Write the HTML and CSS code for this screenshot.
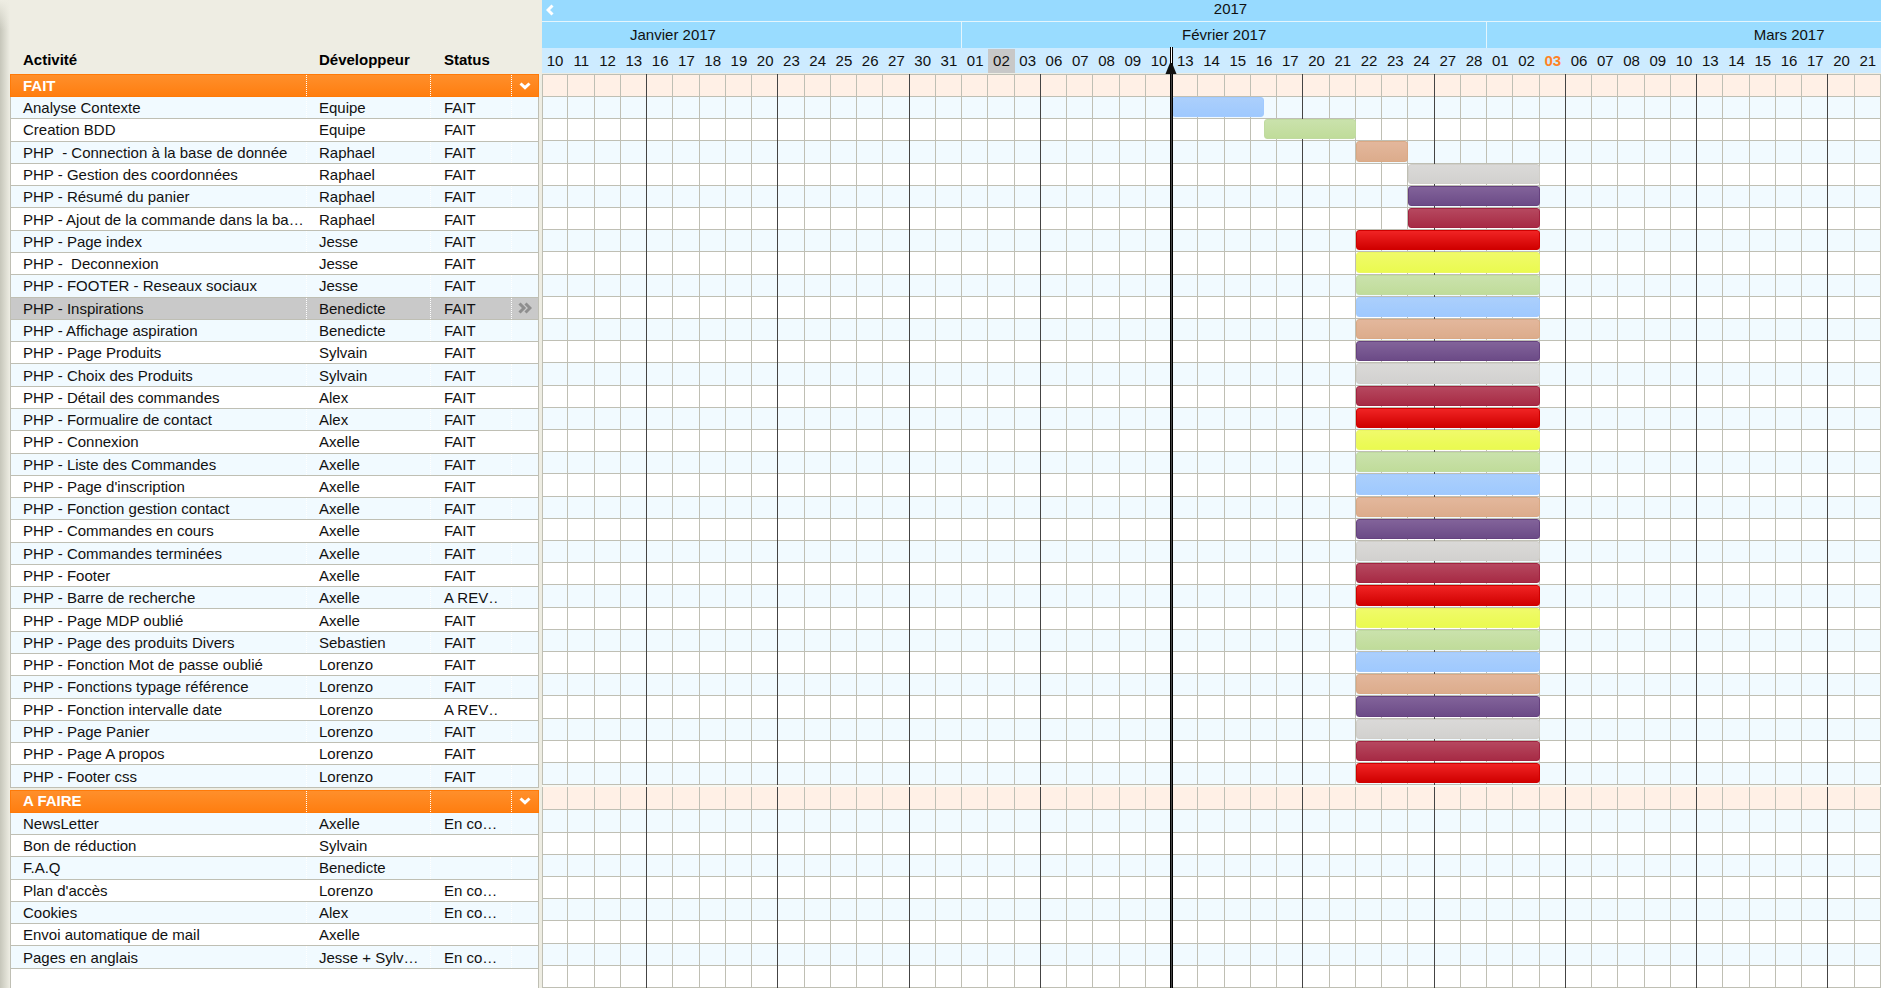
FILE: index.html
```html
<!DOCTYPE html>
<html lang="fr">
<head>
<meta charset="utf-8">
<title>Planning 2017</title>
<link rel="stylesheet" href="styles.css">
</head>
<body>
<main class="planner">
<section class="tasks">
<table class="task-table">
<thead>
<tr><th scope="col">Activité</th><th scope="col">Développeur</th><th scope="col">Status</th><th></th></tr>
</thead>
<tbody>
<tr class="group"><th scope="rowgroup">FAIT</th><td></td><td></td><td class="tool"><button type="button" aria-label="Replier FAIT"><svg width="12" height="8" viewBox="0 0 12 8"><path d="M1.5 1.5 6 5.7 10.5 1.5"/></svg></button></td></tr>
<tr class="tint"><td>Analyse Contexte</td><td>Equipe</td><td>FAIT</td><td></td></tr>
<tr><td>Creation BDD</td><td>Equipe</td><td>FAIT</td><td></td></tr>
<tr class="tint"><td>PHP&nbsp; - Connection à la base de donnée</td><td>Raphael</td><td>FAIT</td><td></td></tr>
<tr><td>PHP - Gestion des coordonnées</td><td>Raphael</td><td>FAIT</td><td></td></tr>
<tr class="tint"><td>PHP - Résumé du panier</td><td>Raphael</td><td>FAIT</td><td></td></tr>
<tr><td>PHP - Ajout de la commande dans la ba…</td><td>Raphael</td><td>FAIT</td><td></td></tr>
<tr class="tint"><td>PHP - Page index</td><td>Jesse</td><td>FAIT</td><td></td></tr>
<tr><td>PHP -&nbsp; Deconnexion</td><td>Jesse</td><td>FAIT</td><td></td></tr>
<tr class="tint"><td>PHP - FOOTER - Reseaux sociaux</td><td>Jesse</td><td>FAIT</td><td></td></tr>
<tr class="selected"><td>PHP - Inspirations</td><td>Benedicte</td><td>FAIT</td><td class="tool"><button type="button" aria-label="Ouvrir la tâche"><svg width="14" height="12" viewBox="0 0 14 12"><path d="M1.5 1.5 6 6 1.5 10.5M7.5 1.5 12 6 7.5 10.5"/></svg></button></td></tr>
<tr class="tint"><td>PHP - Affichage aspiration</td><td>Benedicte</td><td>FAIT</td><td></td></tr>
<tr><td>PHP - Page Produits</td><td>Sylvain</td><td>FAIT</td><td></td></tr>
<tr class="tint"><td>PHP - Choix des Produits</td><td>Sylvain</td><td>FAIT</td><td></td></tr>
<tr><td>PHP - Détail des commandes</td><td>Alex</td><td>FAIT</td><td></td></tr>
<tr class="tint"><td>PHP - Formualire de contact</td><td>Alex</td><td>FAIT</td><td></td></tr>
<tr><td>PHP - Connexion</td><td>Axelle</td><td>FAIT</td><td></td></tr>
<tr class="tint"><td>PHP - Liste des Commandes</td><td>Axelle</td><td>FAIT</td><td></td></tr>
<tr><td>PHP - Page d'inscription</td><td>Axelle</td><td>FAIT</td><td></td></tr>
<tr class="tint"><td>PHP - Fonction gestion contact</td><td>Axelle</td><td>FAIT</td><td></td></tr>
<tr><td>PHP - Commandes en cours</td><td>Axelle</td><td>FAIT</td><td></td></tr>
<tr class="tint"><td>PHP - Commandes terminées</td><td>Axelle</td><td>FAIT</td><td></td></tr>
<tr><td>PHP - Footer</td><td>Axelle</td><td>FAIT</td><td></td></tr>
<tr class="tint"><td>PHP - Barre de recherche</td><td>Axelle</td><td>A REV…</td><td></td></tr>
<tr><td>PHP - Page MDP oublié</td><td>Axelle</td><td>FAIT</td><td></td></tr>
<tr class="tint"><td>PHP - Page des produits Divers</td><td>Sebastien</td><td>FAIT</td><td></td></tr>
<tr><td>PHP - Fonction Mot de passe oublié</td><td>Lorenzo</td><td>FAIT</td><td></td></tr>
<tr class="tint"><td>PHP - Fonctions typage référence</td><td>Lorenzo</td><td>FAIT</td><td></td></tr>
<tr><td>PHP - Fonction intervalle date</td><td>Lorenzo</td><td>A REV…</td><td></td></tr>
<tr class="tint"><td>PHP - Page Panier</td><td>Lorenzo</td><td>FAIT</td><td></td></tr>
<tr><td>PHP - Page A propos</td><td>Lorenzo</td><td>FAIT</td><td></td></tr>
<tr class="tint"><td>PHP - Footer css</td><td>Lorenzo</td><td>FAIT</td><td></td></tr>
</tbody>
<tbody>
<tr class="group next"><th scope="rowgroup">A FAIRE</th><td></td><td></td><td class="tool"><button type="button" aria-label="Replier A FAIRE"><svg width="12" height="8" viewBox="0 0 12 8"><path d="M1.5 1.5 6 5.7 10.5 1.5"/></svg></button></td></tr>
<tr class="tint"><td>NewsLetter</td><td>Axelle</td><td>En co…</td><td></td></tr>
<tr><td>Bon de réduction</td><td>Sylvain</td><td></td><td></td></tr>
<tr class="tint"><td>F.A.Q</td><td>Benedicte</td><td></td><td></td></tr>
<tr><td>Plan d'accès</td><td>Lorenzo</td><td>En co…</td><td></td></tr>
<tr class="tint"><td>Cookies</td><td>Alex</td><td>En co…</td><td></td></tr>
<tr><td>Envoi automatique de mail</td><td>Axelle</td><td></td><td></td></tr>
<tr class="tint"><td>Pages en anglais</td><td>Jesse + Sylv…</td><td>En co…</td><td></td></tr>
<tr class="blank"><td></td><td></td><td></td><td></td></tr>
</tbody>
</table>
</section>

<section class="timeline">
<header class="scale">
<div class="year"><button type="button" class="back" aria-label="Période précédente"><svg width="8" height="12" viewBox="0 0 8 12"><path d="M6.5 1.5 2 6 6.5 10.5"/></svg></button><span>2017</span></div>
<div class="months">
<div class="january"><span>Janvier 2017</span></div><div class="february"><span>Février 2017</span></div><div class="march"><span>Mars 2017</span></div>
</div>
<div class="days">
<span>10</span><span>11</span><span>12</span><span>13</span><span>16</span><span>17</span><span>18</span><span>19</span><span>20</span><span>23</span><span>24</span><span>25</span><span>26</span><span>27</span><span>30</span><span>31</span>
<span>01</span><span class="picked">02</span><span>03</span><span>06</span><span>07</span><span>08</span><span>09</span><span>10</span><span>13</span><span>14</span><span>15</span><span>16</span><span>17</span><span>20</span><span>21</span><span>22</span><span>23</span><span>24</span><span>27</span><span>28</span>
<span>01</span><span>02</span><span class="today">03</span><span>06</span><span>07</span><span>08</span><span>09</span><span>10</span><span>13</span><span>14</span><span>15</span><span>16</span><span>17</span><span>20</span><span>21</span>
</div>
</header>
<div class="lanes">
<div class="lane-group"></div>
<div class="lane tint"><div class="bar first blue"></div></div>
<div class="lane"><div class="bar second green"></div></div>
<div class="lane tint"><div class="bar short tan"></div></div>
<div class="lane"><div class="bar late grey"></div></div>
<div class="lane tint"><div class="bar late purple"></div></div>
<div class="lane"><div class="bar late wine"></div></div>
<div class="lane tint"><div class="bar red"></div></div>
<div class="lane"><div class="bar yellow"></div></div>
<div class="lane tint"><div class="bar green"></div></div>
<div class="lane"><div class="bar blue"></div></div>
<div class="lane tint"><div class="bar tan"></div></div>
<div class="lane"><div class="bar purple"></div></div>
<div class="lane tint"><div class="bar grey"></div></div>
<div class="lane"><div class="bar wine"></div></div>
<div class="lane tint"><div class="bar red"></div></div>
<div class="lane"><div class="bar yellow"></div></div>
<div class="lane tint"><div class="bar green"></div></div>
<div class="lane"><div class="bar blue"></div></div>
<div class="lane tint"><div class="bar tan"></div></div>
<div class="lane"><div class="bar purple"></div></div>
<div class="lane tint"><div class="bar grey"></div></div>
<div class="lane"><div class="bar wine"></div></div>
<div class="lane tint"><div class="bar red"></div></div>
<div class="lane"><div class="bar yellow"></div></div>
<div class="lane tint"><div class="bar green"></div></div>
<div class="lane"><div class="bar blue"></div></div>
<div class="lane tint"><div class="bar tan"></div></div>
<div class="lane"><div class="bar purple"></div></div>
<div class="lane tint"><div class="bar grey"></div></div>
<div class="lane"><div class="bar wine"></div></div>
<div class="lane tint"><div class="bar red"></div></div>
<div class="lane-gap"></div>
<div class="lane-group next"></div>
<div class="lane tint"></div>
<div class="lane"></div>
<div class="lane tint"></div>
<div class="lane"></div>
<div class="lane tint"></div>
<div class="lane"></div>
<div class="lane tint"></div>
<div class="lane"></div>
<div class="columns" aria-hidden="true">
<i></i><i></i><i></i><i></i><i></i><i></i><i></i><i></i><i></i><i></i><i></i><i></i><i></i><i></i><i></i><i></i><i></i>
<i></i><i></i><i></i><i></i><i></i><i></i><i></i><i></i><i></i><i></i><i></i><i></i><i></i><i></i><i></i><i></i><i></i>
<i></i><i></i><i></i><i></i><i></i><i></i><i></i><i></i><i></i><i></i><i></i><i></i><i></i><i></i><i></i><i></i><i></i>
</div>
</div>
<div class="marker"><svg width="12" height="11" viewBox="0 0 12 11"><path d="M5 0H7L8.500 3.500 11.500 11H.5L3.500 3.500Z"/></svg></div>
</section>
</main>
</body>
</html>
```

FILE: styles.css
```css
* { box-sizing: border-box; }

body {
  margin: 0;
  background: #fff;
  color: #111;
  font: 15px/18px "Liberation Sans", Arial, sans-serif;
}

button {
  display: flex;
  padding: 0;
  border: 0;
  background: none;
  cursor: pointer;
}

svg path { fill: none; stroke: #fff; stroke-width: 3; }

.planner {
  display: grid;
  grid-template-columns: 542px 1fr;
  min-height: calc(100vh - 3px);
  margin: 0 8px 3px 0;
}

/* Task list */
.tasks {
  display: flex;
  padding: 0 3px 0 10px;
  background:
    linear-gradient(#eeede3, #eeede300) 0 0 / 10px 30px no-repeat,
    linear-gradient(to right, #c6c6ba, #eeede3) 0 0 / 10px 100% no-repeat,
    #eeede3;
}

.task-table {
  display: flex;
  flex: 1;
  flex-direction: column;
}

.task-table thead { display: block; }
.task-table tbody { display: contents; }

.task-table tr {
  display: grid;
  flex: 1 1 0;
  grid-template-columns: 1fr 124px 81px 27px;
  min-height: 19px;
  background: #fff;
  border: solid #bfbfb4;
  border-width: 0 1px 1px;
}

.task-table th,
.task-table td {
  display: flex;
  align-items: center;
  padding: 0 0 0 12px;
  overflow: hidden;
  text-align: left;
  white-space: nowrap;
  border-left: 1px dotted #fff;
}

.task-table td { padding-top: 1px; }

.task-table th:first-child,
.task-table td:first-child { border-left: 0; }

.task-table th:nth-child(3),
.task-table td:nth-child(3) { padding-left: 13px; }
.task-table td:nth-child(3) > * { flex: none; }
.task-table td:nth-child(3) { border-right: 13px solid transparent; }

.task-table thead tr {
  height: 74px;
  padding-bottom: 4px;
  background: none;
  border-color: transparent;
}

.task-table thead th {
  align-items: flex-end;
  border-color: transparent;
  color: #000;
}

.task-table .tint { background: #f1faff; }
.task-table .selected { background: #c9c9c9; }
.task-table .blank { flex-grow: 0.9; border-bottom: 0; }

.task-table .group {
  flex: 0 0 23px;
  background: linear-gradient(#ff8f2b, #ff7e10);
  border: 1px solid #ff7a08;
  color: #fff;
}

.task-table .next { margin-top: 2px; }

.task-table .tool { padding: 0; justify-content: center; }
.selected .tool path { stroke: #8e8e8e; stroke-width: 3; }

/* Time scale */
.timeline {
  position: relative;
  display: flex;
  flex-direction: column;
  min-width: 0;
}

.scale {
  display: grid;
  grid-template-rows: 22px 26px 26px;
  background: #97daff;
  color: #111;
}

.year {
  position: relative;
  display: flex;
  align-items: center;
  justify-content: center;
  padding: 0 0 4px 38px;
  border-bottom: 1px solid #e4f5fc;
}

.back { position: absolute; left: 4px; top: 4px; }

.months {
  display: grid;
  grid-template-columns: 16fr 20fr 15fr;
  background: #99dcff;
}

.months div {
  display: flex;
  align-items: center;
  min-width: 0;
  overflow: hidden;
  border-right: 1px solid #e4f5fc;
}

.months .march { border-right: 0; }
.months span { flex: none; width: 100%; text-align: center; }

/* January starts before the visible range and March ends after it. */
.months .january { justify-content: flex-end; }
.months .january span { width: calc(100% * 22 / 16); }
.months .march span { width: calc(100% * 23 / 15); }

.days,
.columns {
  display: grid;
  grid-template-columns: repeat(51, minmax(0, 1fr));
}

.days {
  background: #cdebff;
  border-bottom: 1px solid #eeede3;
}

.days span { line-height: 25px; text-align: center; }
.days .picked { margin-top: 1px; line-height: 23px; background: #c8c8c8; }
.days .today { color: #ff8326; font-weight: bold; }

/* Lanes */
.lanes {
  position: relative;
  display: flex;
  flex: 1;
  flex-direction: column;
}

.lane,
.lane-group { border-bottom: 1px solid #bfbfb4; background: #fff; }

.lane {
  display: grid;
  flex: 1 1 0;
  grid-template-columns: repeat(102, minmax(0, 1fr));
  min-height: 19px;
}

.lane.tint { background: #f1faff; }

.lane-group {
  flex: 0 0 23px;
  border-top: 1px solid #bfbfb4;
  background: #fff0e6;
}

.lane-group.next { border-top: 0; }
.lane-gap { z-index: 2; flex: 0 0 2px; background: #f8f8f2; }

.columns { position: absolute; inset: 0; z-index: 1; }
.columns i { border-right: 1px solid #bfbfb4; }
.columns i:first-child { border-left: 1px solid #bfbfb4; }
.columns i:nth-child(5n + 4) { border-right-color: #444; }

.bar {
  z-index: 2;
  grid-column: 63 / 77;
  margin-bottom: 1px;
  border: 1px solid;
  border-radius: 3px;
}

.first { grid-column: 49 / 56; }
.second { grid-column: 56 / 63; }
.short { grid-column: 63 / 67; }
.late { grid-column: 67 / 77; }

.blue { background: linear-gradient(#abcffc, #9fc9fe); border-color: #a2caff; }
.green { background: linear-gradient(#cae2ac, #c0dc9a); border-color: #c0dba0; }
.tan { background: linear-gradient(#e3b79c, #dcac8c); border-color: #daa985; }
.grey { background: linear-gradient(#dad9d8, #d2d1cf); border-color: #d0cec9; }
.purple { background: linear-gradient(#82639a, #6c4b87); border-color: #66427f; }
.wine { background: linear-gradient(#b6485f, #a72b45); border-color: #a12340; }
.red { background: linear-gradient(#f02424, #d00000); border-color: #d00000; }
.yellow { background: linear-gradient(#f0fa6a, #eafa50); border-color: #ebf760; }

/* Current position */
.marker {
  position: absolute;
  top: 47px;
  bottom: 0;
  left: calc(100% * 24 / 51 - 2px);
  z-index: 3;
  width: 3px;
  border: solid #000;
  border-width: 0 1px;
  background: linear-gradient(#fff 18px, #444 18px);
}

.marker svg { position: absolute; top: 16px; left: -6px; }
.marker path { fill: #111; stroke: none; }
```
